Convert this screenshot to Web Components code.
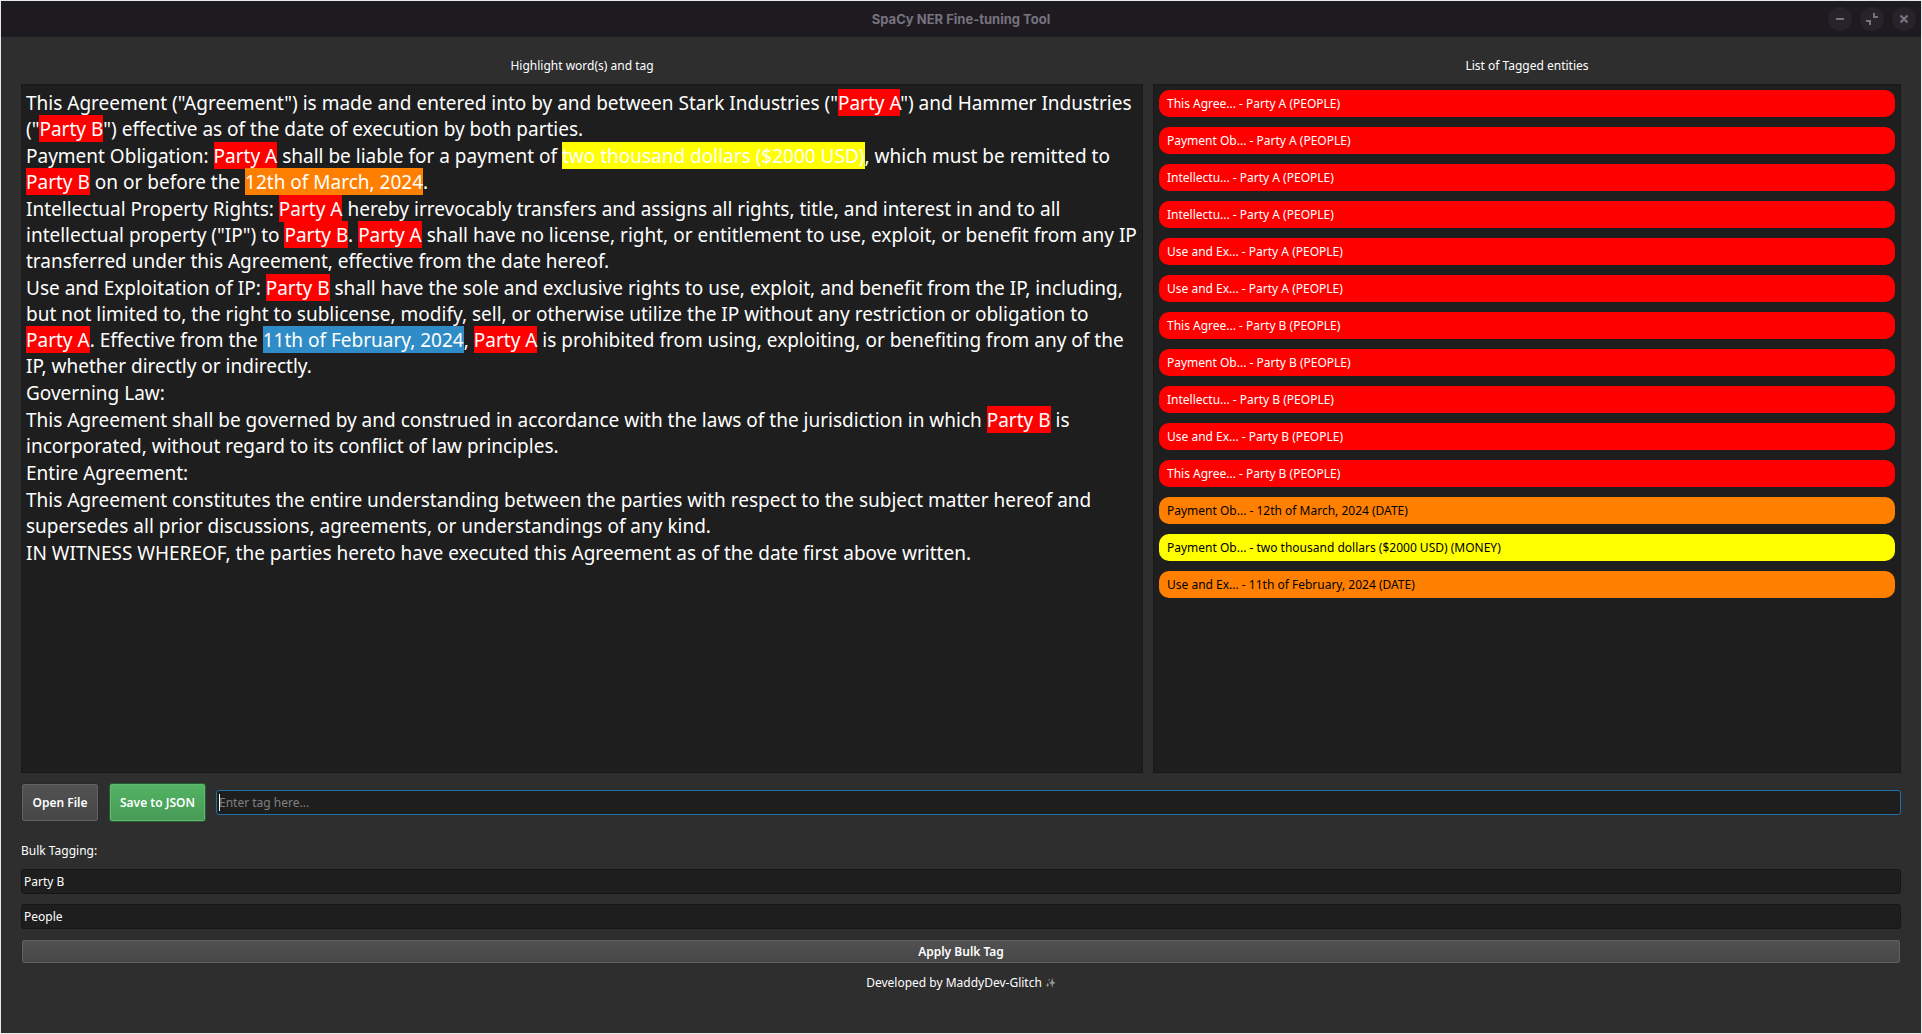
<!DOCTYPE html>
<html lang="en">
<head>
<meta charset="utf-8">
<title>SpaCy NER Fine-tuning Tool</title>
<style>
  html, body { margin: 0; height: 100%; }
  body {
    background: #2e2e2e;
    color: #ffffff;
    font: 12px/17px "Noto Sans", sans-serif;
  }
</style>
</head>
<body>
<ner-window></ner-window>

<script>
  const define = (name, html, setup) => {
    const template = document.createElement('template');
    template.innerHTML = html.trim();
    customElements.define(name, class extends HTMLElement {
      constructor() {
        super();
        this.attachShadow({ mode: 'open' }).append(template.content.cloneNode(true));
      }
      connectedCallback() {
        if (setup) setup(this, this.shadowRoot);
      }
    });
  };

  define('title-bar', `
    <style>
      :host {
        display: grid;
        grid-template-columns: 1fr auto 1fr;
        align-items: center;
        height: 36px;
        padding: 0 5px;
        background: linear-gradient(#1c1e1f 0, #1e1b20 3px);
        color: #77727f;
      }
      h1 { grid-column: 2; margin: 0; font: 700 13px/17px Inter, sans-serif; }
      .controls { display: flex; gap: 8px; justify-content: flex-end; }
      button {
        display: block; width: 24px; height: 24px; padding: 0; border: 0;
        border-radius: 50%; background: #26232a; color: inherit;
      }
      svg { display: block; width: 24px; height: 24px; }
    </style>
    <h1><slot></slot></h1>
    <div class="controls">
      <button type="button" aria-label="Minimize"><svg viewBox="0 0 24 24"><path d="M8 12h8" stroke="currentColor" stroke-width="2"/></svg></button>
      <button type="button" aria-label="Restore"><svg viewBox="0 0 24 24"><path d="M14 6v4h4M6 14h4v4" fill="none" stroke="currentColor" stroke-width="2"/></svg></button>
      <button type="button" aria-label="Close"><svg viewBox="0 0 24 24"><path d="M8.500 8.500l7 7M15.500 8.500l-7 7" stroke="currentColor" stroke-width="2.400"/></svg></button>
    </div>`);

  define('titled-panel', `
    <style>
      :host { display: flex; flex-direction: column; gap: 10px; min-width: 0; }
      h2 { margin: 0; font: inherit; text-align: center; }
      .body {
        flex: 1; box-sizing: border-box; padding: 5px var(--panel-inset, 5px);
        background: #1e1e1e; border: 1px solid #181818;
      }
    </style>
    <h2></h2>
    <div class="body"><slot></slot></div>`,
    (host, root) => { root.querySelector('h2').textContent = host.getAttribute('heading'); });

  define('entity-mark', `
    <style>
      :host { display: inline; --mark: #ff0000; }
      :host([kind="date"]) { --mark: #ff8000; }
      :host([kind="money"]) { --mark: #ffff00; }
      :host([kind="selected"]) { --mark: #308cc6; }
      mark { color: #ffffff; background: var(--mark); box-shadow: 0 -1px 0 var(--mark); }
    </style><mark><slot></slot></mark>`);

  define('agreement-text', `
    <style>
      :host { display: block; font-size: 19px; line-height: 26px; }
      p { margin: 0; padding-bottom: 1px; }
    </style>
    <p>This Agreement ("Agreement") is made and entered into by and between Stark Industries ("<entity-mark>Party A</entity-mark>") and Hammer Industries ("<entity-mark>Party B</entity-mark>") effective as of the date of execution by both parties.</p>
    <p>Payment Obligation: <entity-mark>Party A</entity-mark> shall be liable for a payment of <entity-mark kind="money">two thousand dollars ($2000 USD)</entity-mark>, which must be remitted to <entity-mark>Party B</entity-mark> on or before the <entity-mark kind="date">12th of March, 2024</entity-mark>.</p>
    <p>Intellectual Property Rights: <entity-mark>Party A</entity-mark> hereby irrevocably transfers and assigns all rights, title, and interest in and to all intellectual property ("IP") to <entity-mark>Party B</entity-mark>. <entity-mark>Party A</entity-mark> shall have no license, right, or entitlement to use, exploit, or benefit from any IP transferred under this Agreement, effective from the date hereof.</p>
    <p>Use and Exploitation of IP: <entity-mark>Party B</entity-mark> shall have the sole and exclusive rights to use, exploit, and benefit from the IP, including, but not limited to, the right to sublicense, modify, sell, or otherwise utilize the IP without any restriction or obligation to <entity-mark>Party A</entity-mark>. Effective from the <entity-mark kind="selected">11th of February, 2024</entity-mark>, <entity-mark>Party A</entity-mark> is prohibited from using, exploiting, or benefiting from any of the IP, whether directly or indirectly.</p>
    <p>Governing Law:</p>
    <p>This Agreement shall be governed by and construed in accordance with the laws of the jurisdiction in which <entity-mark>Party B</entity-mark> is incorporated, without regard to its conflict of law principles.</p>
    <p>Entire Agreement:</p>
    <p>This Agreement constitutes the entire understanding between the parties with respect to the subject matter hereof and supersedes all prior discussions, agreements, or understandings of any kind.</p>
    <p>IN WITNESS WHEREOF, the parties hereto have executed this Agreement as of the date first above written.</p>`);

  define('entity-list', `
    <style>
      :host { display: block; }
      ul { display: flex; flex-direction: column; gap: 10px; margin: 0; padding: 0; list-style: none; }
      li { padding: 5px 8px; border-radius: 10px; background: #ff0000; }
      li.date { background: #ff8000; color: #000000; }
      li.money { background: #ffff00; color: #000000; }
    </style>
    <ul>
      <li>This Agree... - Party A (PEOPLE)</li>
      <li>Payment Ob... - Party A (PEOPLE)</li>
      <li>Intellectu... - Party A (PEOPLE)</li>
      <li>Intellectu... - Party A (PEOPLE)</li>
      <li>Use and Ex... - Party A (PEOPLE)</li>
      <li>Use and Ex... - Party A (PEOPLE)</li>
      <li>This Agree... - Party B (PEOPLE)</li>
      <li>Payment Ob... - Party B (PEOPLE)</li>
      <li>Intellectu... - Party B (PEOPLE)</li>
      <li>Use and Ex... - Party B (PEOPLE)</li>
      <li>This Agree... - Party B (PEOPLE)</li>
      <li class="date">Payment Ob... - 12th of March, 2024 (DATE)</li>
      <li class="money">Payment Ob... - two thousand dollars ($2000 USD) (MONEY)</li>
      <li class="date">Use and Ex... - 11th of February, 2024 (DATE)</li>
    </ul>`);

  define('push-button', `
    <style>
      :host { display: block; }
      button {
        display: block; width: 100%; box-sizing: border-box;
        padding: 2px 9px; border: 1px solid #2a2a2a; border-radius: 3px;
        background: linear-gradient(#525252, #464646);
        box-shadow: inset 0 0 0 1px #636363;
        color: #ffffff; font: 600 12px/19px "Noto Sans", sans-serif;
      }
      :host([size="large"]) button { min-width: 78px; padding: 9px 10px; }
      :host([kind="primary"]) button {
        border-color: #245e30;
        background: linear-gradient(#52b463, #479a56);
        box-shadow: inset 0 0 0 1px #62b772;
      }
    </style>
    <button type="button"><slot></slot></button>`);

  define('text-field', `
    <style>
      :host { display: flex; flex-direction: column; gap: 10px; }
      label:empty { display: none; }
      input {
        display: block; width: 100%; height: 25px; box-sizing: border-box;
        margin: 0; padding: 0 2px; border: 1px solid #161616; border-radius: 3px;
        outline: 0; background: #1e1e1e; color: #ffffff; font: inherit;
      }
      input::placeholder { color: #808080; opacity: 1; }
      :host([active]) input {
        border-color: #2270a4;
        background: linear-gradient(#ffffff, #ffffff) 2px 50% / 1px 17px no-repeat #1e1e1e;
      }
    </style>
    <label for="field"></label>
    <input id="field" type="text">`,
    (host, root) => {
      const input = root.querySelector('input');
      root.querySelector('label').textContent = host.getAttribute('label') || '';
      input.value = host.getAttribute('value') || '';
      input.placeholder = host.getAttribute('placeholder') || '';
      if (host.hasAttribute('name')) input.setAttribute('aria-label', host.getAttribute('name'));
    });

  define('ner-window', `
    <style>
      :host {
        display: flex; flex-direction: column; box-sizing: border-box;
        min-height: 100vh; border: 1px solid #e6e9e8; background: #2e2e2e;
      }
      main { flex: 1; display: flex; flex-direction: column; gap: 10px; padding: 20px 20px 42px; }
      .panels { flex: 1; display: grid; grid-template-columns: 3fr 2fr; gap: 10px; }
      .document { --panel-inset: 4px; }
      .actions { display: flex; align-items: center; gap: 10px; }
      .actions text-field { flex: 1; }
      .bulk { display: flex; flex-direction: column; gap: 10px; padding-top: 10px; }
      footer { display: flex; gap: 3px; align-items: center; justify-content: center; }
      .sparkles { font-size: 9px; filter: grayscale(1) brightness(0.7); }
    </style>
    <title-bar>SpaCy NER Fine-tuning Tool</title-bar>
    <main>
      <div class="panels">
        <titled-panel class="document" heading="Highlight word(s) and tag"><agreement-text></agreement-text></titled-panel>
        <titled-panel heading="List of Tagged entities"><entity-list></entity-list></titled-panel>
      </div>
      <div class="actions">
        <push-button size="large">Open File</push-button>
        <push-button size="large" kind="primary">Save to JSON</push-button>
        <text-field active name="Tag" placeholder="Enter tag here..."></text-field>
      </div>
      <section class="bulk">
        <text-field label="Bulk Tagging:" value="Party B"></text-field>
        <text-field name="Bulk tag label" value="People"></text-field>
        <push-button>Apply Bulk Tag</push-button>
      </section>
      <footer><span>Developed by MaddyDev-Glitch</span><span class="sparkles">✨</span></footer>
    </main>`);
</script>
</body>
</html>
